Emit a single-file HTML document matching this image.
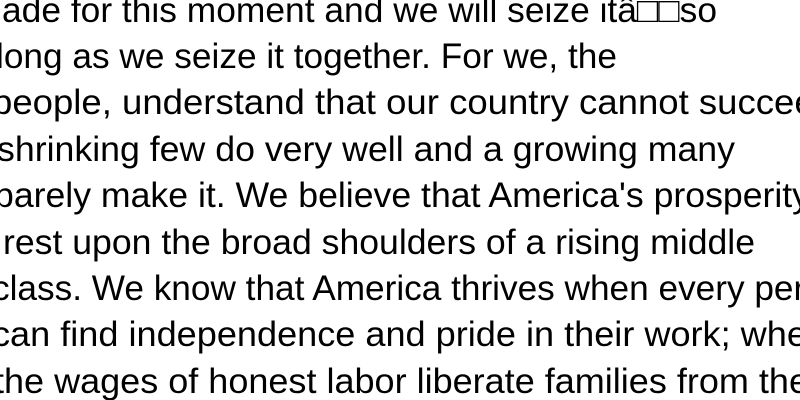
<!DOCTYPE html>
<html><head><meta charset="utf-8"><style>
html,body{margin:0;padding:0;background:#fff;width:800px;height:400px;overflow:hidden}
svg{display:block}
text{font-family:"Liberation Sans","DejaVu Sans",sans-serif;font-size:35px;fill:#000}
</style></head><body>
<svg width="800" height="400" viewBox="0 0 800 400">
<text x="2" y="22" textLength="715" lengthAdjust="spacingAndGlyphs">ade for this moment and we will seize itâ□□so</text>
<text x="-4" y="68" textLength="621" lengthAdjust="spacingAndGlyphs">long as we seize it together. For we, the</text>
<text x="-8" y="114" textLength="843" lengthAdjust="spacingAndGlyphs">people, understand that our country cannot succeed</text>
<text x="-3" y="161" textLength="738" lengthAdjust="spacingAndGlyphs">shrinking few do very well and a growing many</text>
<text x="-6" y="207" textLength="816" lengthAdjust="spacingAndGlyphs">barely make it. We believe that America's prosperity</text>
<text x="3" y="254" textLength="752" lengthAdjust="spacingAndGlyphs">rest upon the broad shoulders of a rising middle</text>
<text x="-8" y="300" textLength="870" lengthAdjust="spacingAndGlyphs">class. We know that America thrives when every person</text>
<text x="-8" y="346" textLength="835" lengthAdjust="spacingAndGlyphs">can find independence and pride in their work; when</text>
<text x="-6" y="393" textLength="815" lengthAdjust="spacingAndGlyphs">the wages of honest labor liberate families from the</text>
</svg>
</body></html>
